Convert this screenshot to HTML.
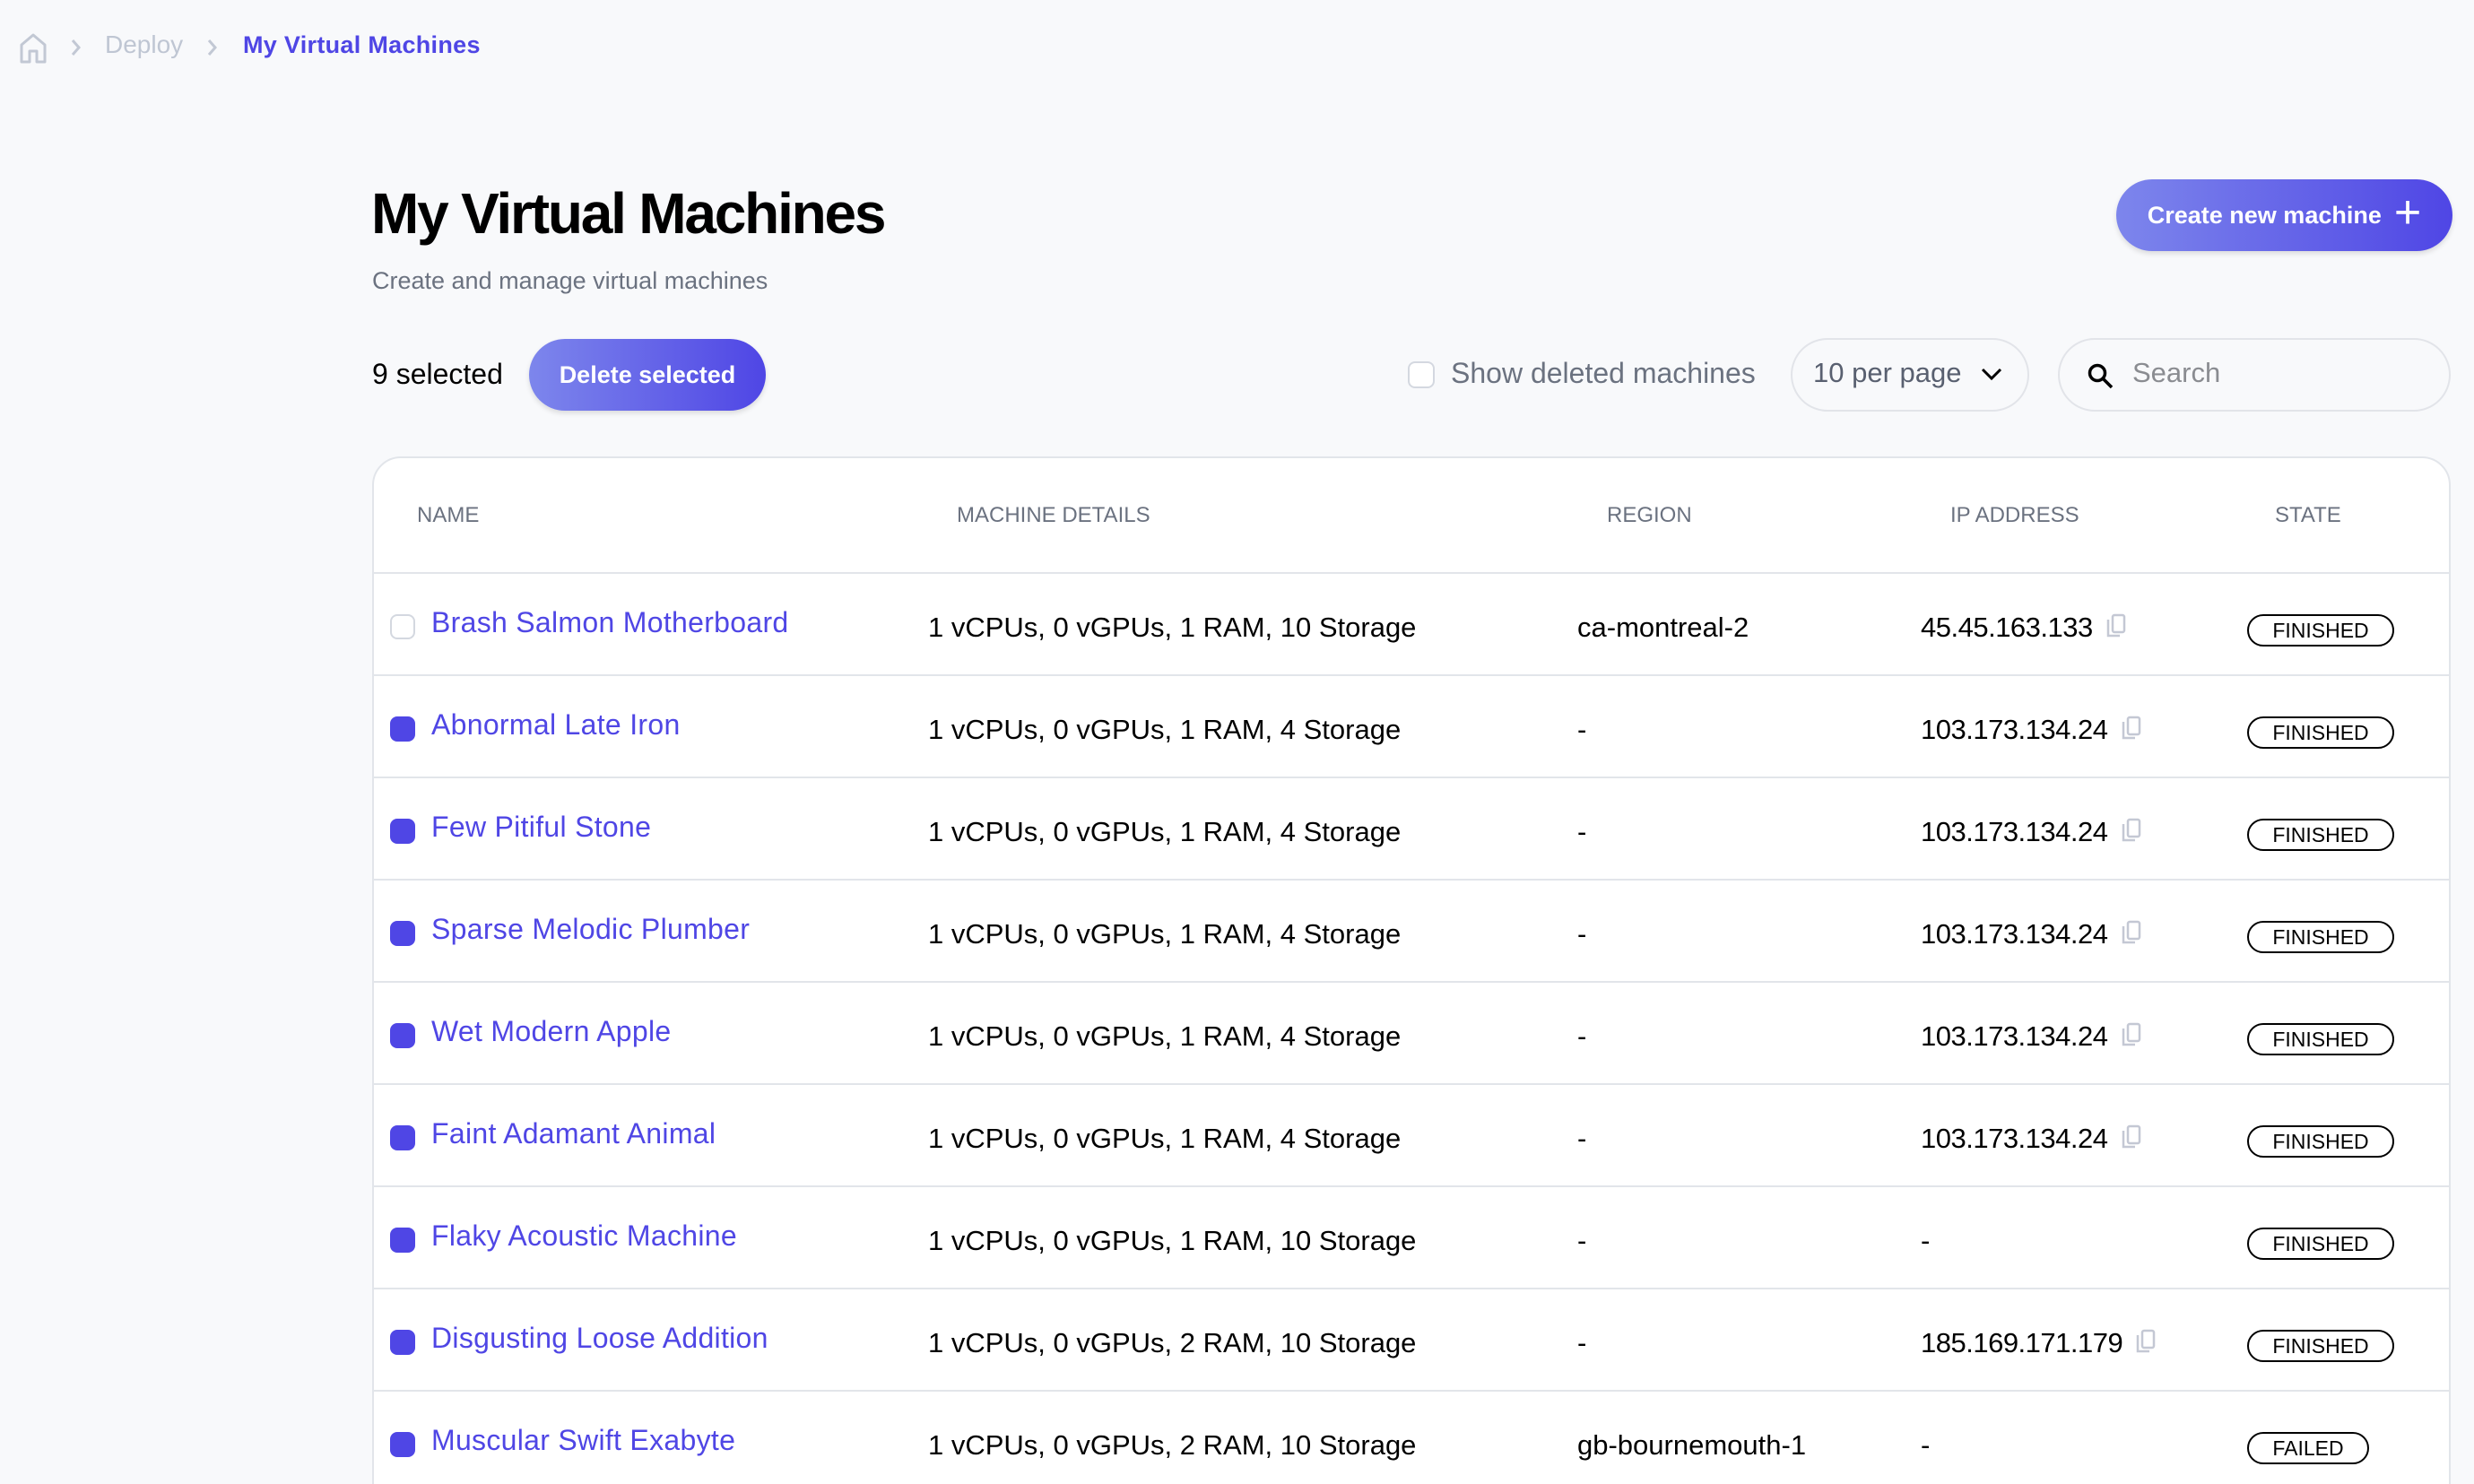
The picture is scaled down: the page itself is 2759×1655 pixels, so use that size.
<!DOCTYPE html>
<html style="width:2759px;height:1655px;overflow:hidden"><head><meta charset="utf-8"><style>
*{margin:0;padding:0;box-sizing:border-box}
body{width:2759px;height:1655px;background:#f8f9fb;font-family:"Liberation Sans",sans-serif;position:relative;overflow:hidden;color:#000}
.a{position:absolute;white-space:nowrap}
.btn{position:absolute;border-radius:40px;background:linear-gradient(90deg,#7d86ec,#4f46e5);color:#fff;font-size:27px;font-weight:bold;display:flex;align-items:center;justify-content:center;box-shadow:0 3px 6px rgba(0,0,0,.12)}
.pill{position:absolute;border:2px solid #e2e4e9;border-radius:42px;background:#f8f9fb}
.table{position:absolute;left:415px;top:509px;width:2318px;height:1200px;background:#fff;border:2px solid #e2e5ea;border-radius:32px}
.th{position:absolute;top:561px;font-size:24px;color:#6b7280}
.row{position:absolute;left:417px;width:2314px;height:114px;border-top:2px solid #e2e5ea}
.row .cb{position:absolute;left:18px;top:45px;width:28px;height:28px;border-radius:8px;background:#4f46e5}
.row .nm{position:absolute;left:64px;top:36px;font-size:32px;letter-spacing:0.3px;color:#4f46e5;white-space:nowrap}
.row .d{position:absolute;top:42px;font-size:31px;white-space:nowrap}
.row .ip{position:absolute;left:1725px;top:42px;font-size:31px;letter-spacing:-0.5px;display:flex;align-items:center;white-space:nowrap}
.ip svg{margin-left:14px;margin-top:-4px}
.badge{position:absolute;left:2089px;top:45px;height:36px;border:2.5px solid #000;border-radius:18px;font-size:23px;display:flex;align-items:center;justify-content:center}
</style></head><body>
<svg class="a" style="left:22px;top:37px" width="30" height="34" viewBox="0 0 30 34"><path d="M2 32V13L15 2L28 13V32H19V20H11V32Z" fill="none" stroke="#c2c8d4" stroke-width="3" stroke-linejoin="round"/></svg>
<svg class="a" style="left:78px;top:42px" width="14" height="22" viewBox="0 0 14 22"><path d="M3 3L10 11L3 19" fill="none" stroke="#c2c8d4" stroke-width="3"/></svg>
<div class="a" style="left:117px;top:34px;font-size:28px;color:#bfc6d3">Deploy</div>
<svg class="a" style="left:230px;top:42px" width="14" height="22" viewBox="0 0 14 22"><path d="M3 3L10 11L3 19" fill="none" stroke="#c2c8d4" stroke-width="3"/></svg>
<div class="a" style="left:271px;top:35px;font-size:27px;color:#4f46e5;font-weight:bold;letter-spacing:0.3px">My Virtual Machines</div>

<div class="a" style="left:414px;top:201px;font-size:64px;font-weight:bold;letter-spacing:-2.2px">My Virtual Machines</div>
<div class="a" style="left:415px;top:298px;font-size:27px;color:#6b7280">Create and manage virtual machines</div>
<div class="btn" style="left:2360px;top:200px;width:375px;height:80px">Create new machine<span style="font-size:52px;font-weight:normal;margin-left:14px;margin-top:-6px">+</span></div>

<div class="a" style="left:415px;top:399px;font-size:32px">9 selected</div>
<div class="btn" style="left:590px;top:378px;width:264px;height:80px">Delete selected</div>

<div class="a" style="left:1570px;top:403px;width:30px;height:30px;border:2px solid #d4d8e0;border-radius:8px;background:#fff"></div>
<div class="a" style="left:1618px;top:398px;font-size:32px;color:#6b7280">Show deleted machines</div>
<div class="pill" style="left:1997px;top:377px;width:266px;height:82px"></div>
<div class="a" style="left:2022px;top:398px;font-size:31px;color:#596070">10 per page</div>
<svg class="a" style="left:2208px;top:408px" width="26" height="18" viewBox="0 0 26 18"><path d="M3 4L13 14L23 4" fill="none" stroke="#000" stroke-width="3"/></svg>
<div class="pill" style="left:2295px;top:377px;width:438px;height:82px"></div>
<svg class="a" style="left:2327px;top:404px" width="32" height="32" viewBox="0 0 32 32"><circle cx="12" cy="12" r="8.5" fill="none" stroke="#000" stroke-width="3.5"/><path d="M18 18L28 28" stroke="#000" stroke-width="3.5"/></svg>
<div class="a" style="left:2378px;top:398px;font-size:31px;color:#8a8c91">Search</div>

<div class="table"></div>
<div class="th" style="left:465px">NAME</div>
<div class="th" style="left:1067px">MACHINE DETAILS</div>
<div class="th" style="left:1792px">REGION</div>
<div class="th" style="left:2175px">IP ADDRESS</div>
<div class="th" style="left:2537px">STATE</div>

<div class="row" style="top:638px"><div class="cb" style="background:#fff;border:2px solid #d4d8e0"></div><div class="nm">Brash Salmon Motherboard</div><div class="d" style="left:618px">1 vCPUs, 0 vGPUs, 1 RAM, 10 Storage</div><div class="d" style="left:1342px">ca-montreal-2</div><div class="ip">45.45.163.133<svg width="24" height="28" viewBox="0 0 24 28"><rect x="8" y="2" width="13" height="19" rx="2" fill="none" stroke="#c4c8d4" stroke-width="2.5"/><path d="M3 7V25H16" fill="none" stroke="#c4c8d4" stroke-width="2.5"/></svg></div><div class="badge" style="width:164px">FINISHED</div></div>
<div class="row" style="top:752px"><div class="cb"></div><div class="nm">Abnormal Late Iron</div><div class="d" style="left:618px">1 vCPUs, 0 vGPUs, 1 RAM, 4 Storage</div><div class="d" style="left:1342px">-</div><div class="ip">103.173.134.24<svg width="24" height="28" viewBox="0 0 24 28"><rect x="8" y="2" width="13" height="19" rx="2" fill="none" stroke="#c4c8d4" stroke-width="2.5"/><path d="M3 7V25H16" fill="none" stroke="#c4c8d4" stroke-width="2.5"/></svg></div><div class="badge" style="width:164px">FINISHED</div></div>
<div class="row" style="top:866px"><div class="cb"></div><div class="nm">Few Pitiful Stone</div><div class="d" style="left:618px">1 vCPUs, 0 vGPUs, 1 RAM, 4 Storage</div><div class="d" style="left:1342px">-</div><div class="ip">103.173.134.24<svg width="24" height="28" viewBox="0 0 24 28"><rect x="8" y="2" width="13" height="19" rx="2" fill="none" stroke="#c4c8d4" stroke-width="2.5"/><path d="M3 7V25H16" fill="none" stroke="#c4c8d4" stroke-width="2.5"/></svg></div><div class="badge" style="width:164px">FINISHED</div></div>
<div class="row" style="top:980px"><div class="cb"></div><div class="nm">Sparse Melodic Plumber</div><div class="d" style="left:618px">1 vCPUs, 0 vGPUs, 1 RAM, 4 Storage</div><div class="d" style="left:1342px">-</div><div class="ip">103.173.134.24<svg width="24" height="28" viewBox="0 0 24 28"><rect x="8" y="2" width="13" height="19" rx="2" fill="none" stroke="#c4c8d4" stroke-width="2.5"/><path d="M3 7V25H16" fill="none" stroke="#c4c8d4" stroke-width="2.5"/></svg></div><div class="badge" style="width:164px">FINISHED</div></div>
<div class="row" style="top:1094px"><div class="cb"></div><div class="nm">Wet Modern Apple</div><div class="d" style="left:618px">1 vCPUs, 0 vGPUs, 1 RAM, 4 Storage</div><div class="d" style="left:1342px">-</div><div class="ip">103.173.134.24<svg width="24" height="28" viewBox="0 0 24 28"><rect x="8" y="2" width="13" height="19" rx="2" fill="none" stroke="#c4c8d4" stroke-width="2.5"/><path d="M3 7V25H16" fill="none" stroke="#c4c8d4" stroke-width="2.5"/></svg></div><div class="badge" style="width:164px">FINISHED</div></div>
<div class="row" style="top:1208px"><div class="cb"></div><div class="nm">Faint Adamant Animal</div><div class="d" style="left:618px">1 vCPUs, 0 vGPUs, 1 RAM, 4 Storage</div><div class="d" style="left:1342px">-</div><div class="ip">103.173.134.24<svg width="24" height="28" viewBox="0 0 24 28"><rect x="8" y="2" width="13" height="19" rx="2" fill="none" stroke="#c4c8d4" stroke-width="2.5"/><path d="M3 7V25H16" fill="none" stroke="#c4c8d4" stroke-width="2.5"/></svg></div><div class="badge" style="width:164px">FINISHED</div></div>
<div class="row" style="top:1322px"><div class="cb"></div><div class="nm">Flaky Acoustic Machine</div><div class="d" style="left:618px">1 vCPUs, 0 vGPUs, 1 RAM, 10 Storage</div><div class="d" style="left:1342px">-</div><div class="ip">-</div><div class="badge" style="width:164px">FINISHED</div></div>
<div class="row" style="top:1436px"><div class="cb"></div><div class="nm">Disgusting Loose Addition</div><div class="d" style="left:618px">1 vCPUs, 0 vGPUs, 2 RAM, 10 Storage</div><div class="d" style="left:1342px">-</div><div class="ip">185.169.171.179<svg width="24" height="28" viewBox="0 0 24 28"><rect x="8" y="2" width="13" height="19" rx="2" fill="none" stroke="#c4c8d4" stroke-width="2.5"/><path d="M3 7V25H16" fill="none" stroke="#c4c8d4" stroke-width="2.5"/></svg></div><div class="badge" style="width:164px">FINISHED</div></div>
<div class="row" style="top:1550px"><div class="cb"></div><div class="nm">Muscular Swift Exabyte</div><div class="d" style="left:618px">1 vCPUs, 0 vGPUs, 2 RAM, 10 Storage</div><div class="d" style="left:1342px">gb-bournemouth-1</div><div class="ip">-</div><div class="badge" style="width:136px">FAILED</div></div>
</body></html>
